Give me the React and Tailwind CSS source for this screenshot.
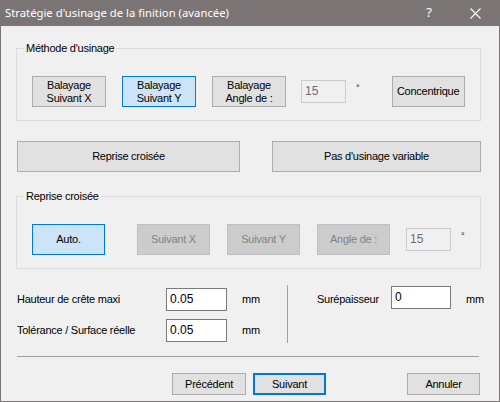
import React from "react";

const font = { fontFamily: '"Liberation Sans", Arial, sans-serif' };

function Btn({ children, className = "", kind = "normal" }) {
  const look =
    kind === "active"
      ? "bg-[#cce4f7] border border-[#0078d7] text-black"
      : kind === "default"
      ? "bg-[#e1e1e1] border-2 border-[#0078d7] text-black"
      : kind === "disabled"
      ? "bg-[#cccccc] border border-[#bfbfbf] text-[#838383]"
      : "bg-[#e1e1e1] border border-[#adadad] text-black";
  return (
    <div className={`flex shrink-0 items-center justify-center text-center text-[11px] leading-[13px] tracking-[-0.25px] ${look} ${className}`}>
      {children}
    </div>
  );
}

function Field({ value, disabled, className = "" }) {
  return (
    <div
      className={`flex h-[23px] shrink-0 items-start px-[3px] pt-[3px] text-[12px] leading-[14px] ${
        disabled ? "border border-[#cccccc] bg-[#f0f0f0] text-[#6d6d6d]" : "border border-[#7a7a7a] bg-white text-black"
      } ${className}`}
    >
      {value}
    </div>
  );
}

function Group({ title, children, className = "" }) {
  return (
    <div className={`relative h-[73px] w-[465px] border border-[#dcdcdc] ${className}`}>
      <span className="absolute left-[7px] top-[-8px] bg-[#f0f0f0] px-[2px] text-[11px] leading-[14px] tracking-[-0.25px] text-black">
        {title}
      </span>
      {children}
    </div>
  );
}

export default function App() {
  return (
    <div style={font} className="flex h-[402px] w-[500px] flex-col border-x border-b border-[#7a7574] bg-[#f0f0f0] text-black">
      {/* Title bar */}
      <div className="flex h-[26px] shrink-0 items-center bg-[#7a7574] pl-[4px] text-white">
        <span className="text-[11.3px]" style={{ fontFamily: '"Noto Sans", "Open Sans", sans-serif' }}>
          Stratégie d'usinage de la finition (avancée)
        </span>
        <span className="ml-auto mr-[38px] text-[13px]" style={{ fontFamily: '"Noto Sans", sans-serif' }}>?</span>
        <svg width="11" height="11" viewBox="0 0 11 11" className="mr-[18px]">
          <path d="M0.5 0.5 L10.5 10.5 M10.5 0.5 L0.5 10.5" stroke="white" strokeWidth="1.1" />
        </svg>
      </div>

      <div className="flex flex-col pl-[15px]">
        {/* Méthode d'usinage */}
        <Group title="Méthode d'usinage" className="mt-[22px]">
          <div className="flex items-start pl-[15px] pt-[27px]">
            <Btn className="h-[31px] w-[74px]">Balayage<br />Suivant X</Btn>
            <Btn kind="active" className="ml-[16px] h-[31px] w-[74px]">Balayage<br />Suivant Y</Btn>
            <Btn className="ml-[16px] h-[31px] w-[74px]">Balayage<br />Angle de :</Btn>
            <Field value="15" disabled className="ml-[15px] mt-[4px] w-[45px]" />
            <span className="ml-[10px] mt-[6px] text-[9px]">°</span>
            <Btn className="ml-[32px] h-[31px] w-[73px]">Concentrique</Btn>
          </div>
        </Group>

        <div className="mt-[20px] flex">
          <Btn className="ml-px h-[31px] w-[223px]">Reprise croisée</Btn>
          <Btn className="ml-[32px] h-[31px] w-[209px]">Pas d'usinage variable</Btn>
        </div>

        {/* Reprise croisée */}
        <Group title="Reprise croisée" className="mt-[24px]">
          <div className="flex items-start pl-[15px] pt-[27px]">
            <Btn kind="active" className="h-[31px] w-[73px]">Auto.</Btn>
            <Btn kind="disabled" className="ml-[32px] h-[31px] w-[73px]">Suivant X</Btn>
            <Btn kind="disabled" className="ml-[17px] h-[31px] w-[73px]">Suivant Y</Btn>
            <Btn kind="disabled" className="ml-[17px] h-[31px] w-[73px]">Angle de :</Btn>
            <Field value="15" disabled className="ml-[16px] mt-[4px] w-[45px]" />
            <span className="ml-[10px] mt-[6px] text-[9px]">°</span>
          </div>
        </Group>

        {/* Parameters */}
        <div className="mt-[16px] flex h-[58px] text-[11px] tracking-[-0.25px]">
          <div className="flex w-[271px] flex-col pl-px pt-[3px]">
            <div className="flex items-center">
              <span className="w-[149px]">Hauteur de crête maxi</span>
              <Field value="0.05" className="w-[61px] tracking-normal" />
              <span className="ml-[15px]">mm</span>
            </div>
            <div className="mt-[8px] flex items-center">
              <span className="w-[149px]">Tolérance / Surface réelle</span>
              <Field value="0.05" className="w-[61px] tracking-normal" />
              <span className="ml-[15px]">mm</span>
            </div>
          </div>
          <div className="w-px bg-[#a0a0a0]" />
          <div className="flex items-start pt-px">
            <span className="ml-[29px] mt-[5px] w-[74px]">Surépaisseur</span>
            <Field value="0" className="w-[60px] tracking-normal" />
            <span className="ml-[15px] mt-[5px]">mm</span>
          </div>
        </div>

        <div className="ml-px mt-[13px] h-px w-[462px] bg-[#a0a0a0]" />

        <div className="mt-[16px] flex text-[11px]">
          <Btn className="ml-[156px] h-[22px] w-[74px]">Précédent</Btn>
          <Btn kind="default" className="ml-[7px] h-[22px] w-[73px]">Suivant</Btn>
          <Btn className="ml-[81px] h-[22px] w-[73px]">Annuler</Btn>
        </div>
      </div>
    </div>
  );
}
